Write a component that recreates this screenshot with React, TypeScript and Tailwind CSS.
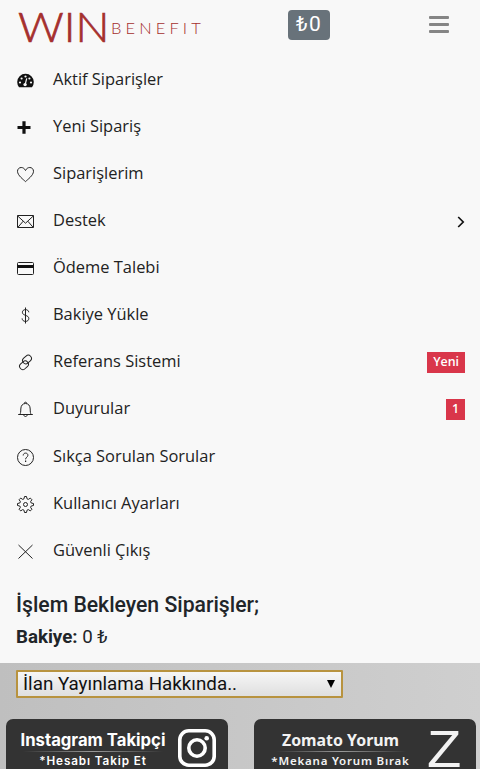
import type { ReactNode } from 'react';

type MenuItem = {
  label: string;
  icon: ReactNode;
  badge?: string;
  arrow?: boolean;
};

const LineIcon = ({ children }: { children: ReactNode }) => (
  <svg viewBox="0 0 17 17" className="h-[17px] w-[17px] shrink-0 overflow-visible" fill="none" stroke="#222" strokeWidth="1">
    {children}
  </svg>
);

const menuItems: MenuItem[] = [
  {
    label: 'Aktif Siparişler',
    icon: (
      <LineIcon>
        <path d="M2 15.2A8.4 8.4 0 0 1 .2 10a8.3 8.3 0 0 1 16.6 0 8.4 8.4 0 0 1-1.8 5.2Z" fill="#111" stroke="none" />
        <g fill="#f8f8f8" stroke="none">
          <circle cx="3" cy="10.5" r="1.1" />
          <circle cx="4.6" cy="6.5" r="1.1" />
          <circle cx="8.5" cy="4.5" r="1.1" />
          <circle cx="12.4" cy="6.5" r="1.1" />
          <circle cx="14" cy="10.5" r="1.1" />
          <circle cx="8.1" cy="12.6" r="1.7" />
        </g>
        <path d="m8.2 12.4 1.5-6" stroke="#f8f8f8" strokeWidth="1.2" />
      </LineIcon>
    ),
  },
  {
    label: 'Yeni Sipariş',
    icon: (
      <LineIcon>
        <path d="M7 2.2v12.6M.5 8.5h13" stroke="#111" strokeWidth="3.2" />
      </LineIcon>
    ),
  },
  {
    label: 'Siparişlerim',
    icon: (
      <LineIcon>
        <path d="M8.5 15.6C6.7 13.8.5 9.4.5 5.3c0-2.2 1.6-3.8 3.7-3.8 2 0 3.4 1.2 4.3 3 .9-1.8 2.3-3 4.3-3 2.1 0 3.7 1.6 3.7 3.8 0 4.1-6.2 8.5-8 10.3Z" />
      </LineIcon>
    ),
  },
  {
    label: 'Destek',
    arrow: true,
    icon: (
      <LineIcon>
        <path d="M.5 2.5h16v12H.5ZM.7 3l7.8 7.2L16.3 3M1 14.2l5.2-6M16 14.2l-5.2-6" />
      </LineIcon>
    ),
  },
  {
    label: 'Ödeme Talebi',
    icon: (
      <LineIcon>
        <rect x=".5" y="2.5" width="16" height="12" rx="1" />
        <path d="M.5 6.5h16" stroke="#111" strokeWidth="3" />
      </LineIcon>
    ),
  },
  {
    label: 'Bakiye Yükle',
    icon: (
      <LineIcon>
        <path d="M8.5.5v16M11.8 5.3C11.6 3.6 10.3 2.6 8.5 2.6S5.4 3.7 5.4 5.3c0 3.7 6.4 2.4 6.4 6.2 0 1.8-1.4 2.9-3.3 2.9s-3.3-1.1-3.4-3" />
      </LineIcon>
    ),
  },
  {
    label: 'Referans Sistemi',
    badge: 'Yeni',
    icon: (
      <LineIcon>
        <rect x="-4.8" y="-3.2" width="9.6" height="6.4" rx="3.2" transform="translate(10 5.5) rotate(-42)" />
        <rect x="-4.8" y="-3.2" width="9.6" height="6.4" rx="3.2" transform="translate(7 11.3) rotate(-42)" />
      </LineIcon>
    ),
  },
  {
    label: 'Duyurular',
    badge: '1',
    icon: (
      <LineIcon>
        <path d="M1.2 13.5h14.6M3 13.3c.5-1 .8-2.3.8-5.3 0-3.4 1.9-5.5 4.7-5.5s4.7 2.1 4.7 5.5c0 3 .3 4.3.8 5.3M7.4 2.3a1.1 1.1 0 0 1 2.2 0M6.8 14c.2 1 .8 1.5 1.7 1.5s1.5-.5 1.7-1.5" />
      </LineIcon>
    ),
  },
  {
    label: 'Sıkça Sorulan Sorular',
    icon: (
      <LineIcon>
        <circle cx="8.5" cy="8.5" r="8" />
        <path d="M6.2 6.5c0-1.5 1-2.4 2.4-2.4s2.3.9 2.3 2.2c0 1.8-2.3 1.9-2.3 4" />
        <path d="M8.6 11.5V13" strokeWidth="1.2" />
      </LineIcon>
    ),
  },
  {
    label: 'Kullanıcı Ayarları',
    icon: (
      <LineIcon>
        <path
          d="m7.5.5h2l.5 2.3 1.3.6 2-1.3 1.6 1.6-1.3 2 .6 1.3 2.3.5v2l-2.3.5-.6 1.3 1.3 2-1.6 1.6-2-1.3-1.3.6-.5 2.3h-2L7 14.2l-1.3-.6-2 1.3-1.6-1.6 1.3-2-.6-1.3L.5 9.5v-2L2.8 7l.6-1.3-1.3-2 1.6-1.6 2 1.3L7 2.8Z"
          strokeLinejoin="round"
        />
        <circle cx="8.5" cy="8.5" r="2" />
      </LineIcon>
    ),
  },
  {
    label: 'Güvenli Çıkış',
    icon: (
      <LineIcon>
        <path d="m1.5 2 14 13.5M15.5 2l-14 13.5" />
      </LineIcon>
    ),
  },
];

const Header = () => (
  <header className="flex h-[57px] shrink-0 items-start">
    <div className="flex w-[288px] items-start pl-[18px] font-['Lato'] leading-none text-[#a52f2e]">
      <span className="mt-[7px] w-[93px] origin-left scale-x-[1.11] whitespace-nowrap text-[40.5px] font-light [-webkit-text-stroke:0.7px_#a52f2e]">
        WIN
      </span>
      <span className="mt-[19.5px] whitespace-nowrap text-[16.5px] font-light tracking-[4.1px]">BENEFIT</span>
    </div>
    <div className="mt-[10px] flex h-[30px] w-[42px] items-center justify-center rounded-[4px] bg-[#68727a] pb-px font-['Roboto'] text-[21px] tracking-[1.2px] text-white">
      <span>₺0</span>
    </div>
    <button aria-label="Menü" className="ml-[99px] mt-[16px] flex flex-col gap-[4px]">
      <span className="h-[3px] w-[20px] rounded-[1px] bg-[#858585]" />
      <span className="h-[3px] w-[20px] rounded-[1px] bg-[#858585]" />
      <span className="h-[3px] w-[20px] rounded-[1px] bg-[#858585]" />
    </button>
  </header>
);

const Menu = () => (
  <nav className="shrink-0">
    <ul>
      {menuItems.map((item) => (
        <li key={item.label} className="flex h-[47.07px] items-center pl-[17px] pr-[15px]">
          {item.icon}
          <span className="ml-[19px] pb-[3px] font-['Open_Sans'] text-[16.45px] leading-6 text-[#222]">{item.label}</span>
          {item.badge && (
            <span className="ml-auto flex h-[21px] items-center bg-[#d9364a] px-[6px] pb-px font-['Open_Sans'] text-[12.4px] font-semibold text-white">
              {item.badge}
            </span>
          )}
          {item.arrow && (
            <svg viewBox="0 0 8 12" className="ml-auto h-[12px] w-[8px]" fill="none" stroke="#111" strokeWidth="1.7">
              <path d="m1.2 1 5 5-5 5" />
            </svg>
          )}
        </li>
      ))}
    </ul>
  </nav>
);

const App = () => {
  return (
    <div className="flex h-[769px] w-[480px] flex-col overflow-hidden bg-[#f8f8f8]">
      <Header />
      <Menu />

      <section className="h-[88.2px] shrink-0 pl-[16px] pt-[17px] font-['Roboto'] text-[#212529]">
        <h2 className="whitespace-nowrap text-[21.2px] font-medium leading-[26px]">İşlem Bekleyen Siparişler;</h2>
        <p className="mt-[7px] text-[18.7px] leading-6">
          <b className="font-bold">Bakiye:</b> 0 ₺
        </p>
      </section>

      <main className="flex-1 bg-linear-to-r from-[#bfbfbf] to-[#cfcfcf]">
        <button className="ml-[16px] mt-[7px] flex h-[28px] w-[327px] items-center justify-between rounded-[1px] border-2 border-[#b8933f] bg-linear-to-b from-[#f6f6f6] to-[#dfdfdf] pl-[5px] pr-[6px] font-['Roboto'] text-[18.8px] text-[#111]">
          <span>İlan Yayınlama Hakkında..</span>
          <svg viewBox="0 0 8 8" className="h-[8px] w-[8px]">
            <path d="M0 0h8L4 8Z" fill="#000" />
          </svg>
        </button>

        <div className="mt-[21px] flex gap-[26px] pl-[6px]">
          <div className="flex h-[50px] w-[222px] shrink-0 rounded-t-[7px] bg-[#333] font-['Inter'] text-white">
            <div className="flex w-[172px] flex-col items-center pl-[2px] pt-[10px]">
              <span className="whitespace-nowrap text-[16.7px] font-bold leading-[22px]">Instagram Takipçi</span>
              <span className="h-px w-[140px] bg-linear-to-r from-transparent via-[#999] to-transparent" />
              <span className="whitespace-nowrap pt-px text-[11.7px] font-semibold leading-[16px] tracking-[0.9px]">*Hesabı Takip Et</span>
            </div>
            <svg viewBox="0 0 38 38" className="mt-[10px] h-[38px] w-[38px]" fill="none" stroke="#fff" strokeWidth="3.6">
              <rect x="1.8" y="1.8" width="34.4" height="34.4" rx="9" />
              <circle cx="19" cy="19" r="8.2" />
              <circle cx="28.7" cy="9.3" r="2.3" fill="#fff" stroke="none" />
            </svg>
          </div>

          <div className="flex h-[50px] w-[222px] shrink-0 rounded-t-[7px] bg-[#333] font-['Noto_Sans'] font-bold text-[#f2f2f2]">
            <div className="flex w-[173px] flex-col items-center pt-[11px]">
              <span className="whitespace-nowrap text-[15.9px] leading-[21px]">Zomato Yorum</span>
              <span className="h-px w-[130px] bg-linear-to-r from-transparent via-[#999] to-transparent" />
              <span className="whitespace-nowrap text-[11.5px] font-semibold leading-[17px] tracking-[0.8px]">*Mekana Yorum Bırak</span>
            </div>
            <span className="mt-[7px] h-[43px] origin-left scale-x-[1.08] font-['Liberation_Sans'] text-[52px] font-normal leading-[46px]">
              Z
            </span>
          </div>
        </div>
      </main>
    </div>
  );
};

export default App;
